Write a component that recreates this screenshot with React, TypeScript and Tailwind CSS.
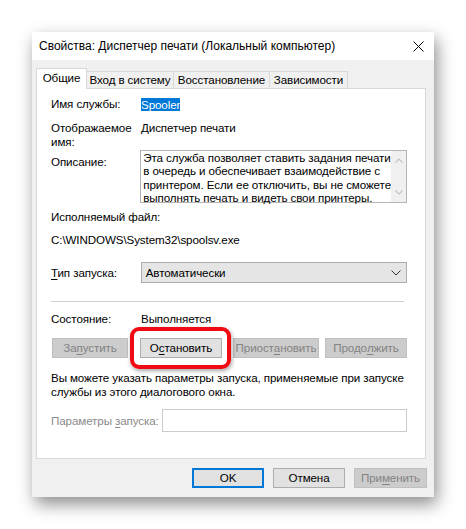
import React from "react";

const U = ({ children }: { children: React.ReactNode }) => (
  <span className="underline underline-offset-2 decoration-1">{children}</span>
);

function Btn({
  w,
  children,
  disabled,
  className = "",
}: {
  w: string;
  children: React.ReactNode;
  disabled?: boolean;
  className?: string;
}) {
  return (
    <div
      className={
        "h-[20px] flex items-center justify-center border " +
        (disabled
          ? "bg-[#cccccc] border-[#bfbfbf] text-[#838383] "
          : "bg-[#e1e1e1] border-[#adadad] text-black ") +
        w +
        " " +
        className
      }
    >
      {children}
    </div>
  );
}

export default function App() {
  return (
    <div
      className="w-[466px] h-[529px] bg-white overflow-hidden pt-[32px] pl-[32px] text-[11.6px] leading-[14px] text-black whitespace-nowrap tracking-[-0.1px]"
      style={{ fontFamily: '"Liberation Sans", Arial, sans-serif' }}
    >
      <div className="w-[402px] h-[465px] flex flex-col bg-[#f0f0f0] shadow-[3px_7px_16px_rgba(0,0,0,0.45)]">
        {/* Title bar */}
        <div className="h-[28px] bg-white flex items-center justify-between pl-[7px] pr-[10px]">
          <span className="text-[12px] tracking-normal">Свойства: Диспетчер печати (Локальный компьютер)</span>
          <svg width="11" height="11" viewBox="0 0 11 11">
            <path d="M0.5 0.5 L10.5 10.5 M10.5 0.5 L0.5 10.5" stroke="#000" strokeWidth="1" />
          </svg>
        </div>

        {/* Body */}
        <div className="flex flex-col pt-[8px] pl-[4px] pr-[8px]">
          {/* Tabs */}
          <div className="flex items-end h-[20px]">
            <div className="relative z-10 w-[51px] h-[21px] -mb-[1px] bg-white border border-[#d9d9d9] border-b-0 flex items-center justify-center pb-[2px]">
              Общие
            </div>
            <div className="w-[87px] h-[17px] bg-[#f0f0f0] border border-l-0 border-b-0 border-[#d9d9d9] flex items-center justify-center">
              Вход в систему
            </div>
            <div className="w-[96px] h-[17px] bg-[#f0f0f0] border border-l-0 border-b-0 border-[#d9d9d9] flex items-center justify-center">
              Восстановление
            </div>
            <div className="w-[78px] h-[17px] bg-[#f0f0f0] border border-l-0 border-b-0 border-[#d9d9d9] flex items-center justify-center">
              Зависимости
            </div>
          </div>

          {/* Panel */}
          <div className="h-[371px] bg-white border border-[#d9d9d9] pl-[14px] pr-[18px] flex flex-col">
            {/* Service name */}
            <div className="mt-[7px] h-[16px] flex items-center">
              <div className="w-[90px]">Имя службы:</div>
              <span className="bg-[#0078d7] text-white h-[13px] leading-[13px]">Spooler</span>
            </div>

            {/* Display name */}
            <div className="mt-[9px] flex">
              <div className="w-[90px]">
                <div>Отображаемое</div>
                <div>имя:</div>
              </div>
              <div>Диспетчер печати</div>
            </div>

            {/* Description */}
            <div className="mt-[1px] flex">
              <div className="w-[90px] pt-[5px]">Описание:</div>
              <div className="w-[267px] h-[53px] border border-[#b4b4b4] flex">
                <div className="flex-1 pl-[2px] leading-[13.3px] h-[51px]">
                  <div>Эта служба позволяет ставить задания печати</div>
                  <div>в очередь и обеспечивает взаимодействие с</div>
                  <div>принтером. Если ее отключить, вы не сможете</div>
                  <div className="h-[11px]">выполнять печать и видеть свои принтеры.</div>
                </div>
                <div className="w-[15px] bg-[#f0f0f0] flex flex-col items-center justify-between py-[7px]">
                  <svg width="8" height="5" viewBox="0 0 8 5">
                    <path d="M0.5 4.5 L4 1 L7.5 4.5" stroke="#c3c3c3" fill="none" strokeWidth="1.1" />
                  </svg>
                  <svg width="8" height="5" viewBox="0 0 8 5">
                    <path d="M0.5 0.5 L4 4 L7.5 0.5" stroke="#c3c3c3" fill="none" strokeWidth="1.1" />
                  </svg>
                </div>
              </div>
            </div>

            {/* Executable */}
            <div className="mt-[7px]">Исполняемый файл:</div>
            <div className="mt-[9px]">C:\WINDOWS\System32\spoolsv.exe</div>

            {/* Startup type */}
            <div className="mt-[15px] flex items-center">
              <div className="w-[90px]">
                <U>Т</U>ип запуска:
              </div>
              <div className="w-[267px] h-[21px] bg-[#e5e5e5] border border-[#adadad] flex items-center justify-between pl-[4px] pr-[5px]">
                <span>Автоматически</span>
                <svg width="10" height="6" viewBox="0 0 10 6">
                  <path d="M0.5 0.5 L5 5 L9.5 0.5" stroke="#333" fill="none" strokeWidth="1" />
                </svg>
              </div>
            </div>

            {/* Separator */}
            <div className="mt-[18px] h-px w-[353px] bg-[#d0d0d0]" />

            {/* State */}
            <div className="mt-[10px] flex">
              <div className="w-[90px]">Состояние:</div>
              <div>Выполняется</div>
            </div>

            {/* Control buttons */}
            <div className="mt-[12px] flex">
              <Btn w="w-[76px]" disabled className="ml-[1px]">
                За<U>п</U>устить
              </Btn>
              <div className="relative ml-[12px]">
                <Btn w="w-[82px]">
                  О<U>с</U>тановить
                </Btn>
                <div className="absolute left-[-10px] right-[-9px] top-[-11px] bottom-[-11px] border-[4px] border-[#f00a14] rounded-[9px] shadow-[1px_2px_4px_rgba(0,0,0,0.35)]" />
              </div>
              <Btn w="w-[86px]" disabled className="ml-[11px]">
                Приост<U>а</U>новить
              </Btn>
              <Btn w="w-[82px]" disabled className="ml-[6px]">
                Продо<U>л</U>жить
              </Btn>
            </div>

            {/* Info */}
            <div className="mt-[13px]">
              <div>Вы можете указать параметры запуска, применяемые при запуске</div>
              <div>службы из этого диалогового окна.</div>
            </div>

            {/* Parameters */}
            <div className="mt-[10px] flex items-center">
              <div className="w-[111px] text-[#8a8a8a]">
                Параметры <U>з</U>апуска:
              </div>
              <div className="w-[246px] h-[23px] border border-[#cccccc] bg-white" />
            </div>
          </div>

          {/* Dialog buttons */}
          <div className="mt-[9px] flex justify-end">
            <div className="w-[72px] h-[20px] bg-[#e1e1e1] border-2 border-[#0078d7] flex items-center justify-center">
              OK
            </div>
            <div className="ml-[9px] w-[72px] h-[20px] bg-[#e1e1e1] border border-[#adadad] flex items-center justify-center">
              Отмена
            </div>
            <div className="ml-[9px] w-[73px] h-[20px] bg-[#cccccc] border border-[#bfbfbf] text-[#838383] flex items-center justify-center -mr-[1px]">
              При<U>м</U>енить
            </div>
          </div>
        </div>
      </div>
    </div>
  );
}
